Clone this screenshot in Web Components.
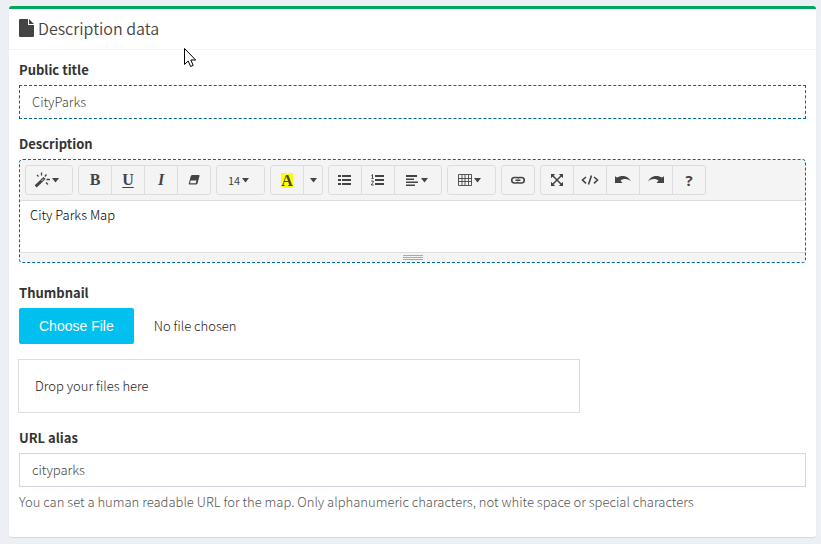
<!DOCTYPE html>
<html lang="en">
<head>
<meta charset="utf-8">
<title>Description data</title>
<style>
body{margin:0;background:#ecf0f5;color:#333;font:300 13px/20px "Source Sans Pro","Noto Sans CJK SC","Noto Sans",sans-serif}
</style>
</head>
<body>
<map-form></map-form>
<mouse-pointer></mouse-pointer>
<script>
function define(name, html, setup){
  const t=document.createElement('template');
  t.innerHTML=html;
  customElements.define(name,class extends HTMLElement{
    connectedCallback(){
      if(this.shadowRoot)return;
      this.attachShadow({mode:'open'}).append(t.content.cloneNode(true));
      if(setup)setup(this,this.shadowRoot);
    }
  });
}

const icons={
  file:'<path d="M1 0h8v6h6v11q0 1-1 1H1q-1 0-1-1V1q0-1 1-1zM10 0l5 5h-5z"/>',
  magic:'<path d="M.7 14.500 9.500 6" stroke="currentColor" stroke-width="3"/><path d="M6.600 8.900 8.300 7.200" stroke="#f4f4f4" stroke-width="1"/><path d="M2 3 3.500 4.500M6.500 .5v3M11.500 2.500 9.800 4.500M11.500 7.500h3.500M11 10.500l2 2" stroke="currentColor" stroke-width="1.300" fill="none"/>',
  eraser:'<path d="M5.500 2h6.300q1 0 .7 1l-2 7.500q-.3 1-1.300 1H2.500q-1 0-.7-1l2-7.500Q4.200 2 5.500 2zM3.700 7.600l-.7 2.700h5.700l.8-2.700z" fill-rule="evenodd"/>',
  ul:'<path d="M0 2h3v2H0zm4 0h9v2H4zM0 6h3v2H0zm4 0h9v2H4zM0 10h3v2H0zm4 0h9v2H4z"/>',
  ol:'<path d="M4 2h9v2H4zM4 6h9v2H4zM4 10h9v2H4z"/><path d="M.5 2.500 1.500 1.500V5.500M.5 5.500h2M.3 8h1.900v1.500L.5 11v1h2.200" stroke="currentColor" fill="none"/>',
  align:'<path d="M1 2h11v2H1zm0 3.500h8v1.500H1zm0 3h12v1.500H1zm0 3h9v1.500H1z"/>',
  table:'<path d="M.5 1.500h13v11H.5zM.5 5.500h13M.5 8.500h13M4 1.500v11M7 1.500v11M10.500 1.500v11" stroke="currentColor" stroke-width=".9" fill="none"/>',
  link:'<path d="M6.300 10H3.500a2.700 2.700 0 0 1 0-5.500h2.500q1.300 0 2 1M7.800 4.500h2.700a2.700 2.700 0 0 1 0 5.500h-2.500q-1.300 0-2-1M4.500 7.200h5" stroke="currentColor" stroke-width="1.600" fill="none"/>',
  full:'<path d="M1 1h4.200L1 5.200zM13 1v4.200L8.800 1zM1 13V8.800L5.200 13zM13 13H8.800L13 8.800z"/><path d="m2 2 10 10M12 2 2 12" stroke="currentColor" stroke-width="1.500"/>',
  code:'<path d="M5 4 1.500 7 5 10.300M13 4 16.500 7 13 10.300M10.500 2.500 7.500 11.500" stroke="currentColor" stroke-width="1.600" fill="none"/>',
  undo:'<path d="M0 3.200 2 4.600C6 2 13 2 16 8.500 12.500 5.500 8.500 5.500 5.500 7.600L7.500 10H0z"/>',
  redo:'<path d="M16 3.200 14 4.600C10 2 3 2 0 8.500 3.500 5.500 7.500 5.500 10.500 7.600L8.500 10H16z"/>',
  caret:'<path d="M0 5h7L3.500 9.500z"/>'
};
const sizes={file:[15,18],magic:[15,16],code:[18,14],undo:[16,14],redo:[16,14],caret:[7,14]};
define('ui-icon','<style>:host{display:inline-flex;flex:none}svg{display:block;fill:currentColor}</style><svg aria-hidden="true"></svg>',(el,r)=>{
  const n=el.getAttribute('name'),[w,h]=sizes[n]||[14,14],s=r.querySelector('svg');
  s.setAttribute('width',w);s.setAttribute('height',h);s.setAttribute('viewBox',`0 0 ${w} ${h}`);
  s.innerHTML=icons[n];
});

define('panel-box',`<style>
:host{display:block;background:#fff;border-top:3px solid #00a65a;border-radius:3px;box-shadow:0 1px 1px rgba(0,0,0,.1)}
header{display:flex;align-items:flex-start;gap:4px;padding:9px 10px 11px;border-bottom:1px solid #f4f4f4;color:#444}
h3{margin:0;font-size:16px;line-height:20px;font-weight:350}
::slotted(ui-icon){padding-top:1px}
section{padding:10px 10px 25px}
</style>
<header><slot name="icon"></slot><h3><slot name="title"></slot></h3></header><section><slot></slot></section>`);

define('text-field',`<style>
:host{display:block;margin-bottom:15px}
label{display:block;margin-bottom:5px;font-weight:700}
input{display:block;box-sizing:border-box;width:100%;height:34px;padding:5px 12px 7px;border:1px solid #d2d6de;border-radius:0;background:#fff;color:#444;font:inherit;outline:0}
:host([dashed]) input{border:1px dashed #006699}
p{margin:5px 0 0;color:#555}
p[hidden]{display:none}
</style><label for="f"></label><input id="f" type="text"><p hidden></p>`,(el,r)=>{
  r.querySelector('label').textContent=el.getAttribute('label');
  r.querySelector('input').value=el.getAttribute('value');
  const h=el.getAttribute('help'),p=r.querySelector('p');
  if(h){p.textContent=h;p.hidden=false;}
});

define('tool-group',`<style>:host{display:inline-flex}
::slotted(:not(:first-child)){margin-left:-1px}
::slotted(:first-child){--rl:3px}::slotted(:last-child){--rr:3px}</style><slot></slot>`);

define('tool-button',`<style>
:host{display:block}
button{display:flex;align-items:center;justify-content:center;gap:2px;box-sizing:border-box;height:30px;min-width:34px;padding:0 6px;border:1px solid #ddd;border-radius:var(--rl,0) var(--rr,0) var(--rr,0) var(--rl,0);background:#f4f4f4;color:#444;font:inherit;font-weight:400;font-size:11px}
:host([size=menu]) button{min-width:48px;padding:0 8px 0 4px}
:host([size=wide]) button{min-width:49px;padding:0 8px 0 4px}
:host([size=slim]) button{min-width:20px;padding:0}
:host([serif]) button{font:700 16px/20px "Liberation Serif",serif}
:host([bold]) button{font:700 15px/20px "Open Sans",sans-serif}
</style><button type="button"><slot></slot></button>`,(el,r)=>r.querySelector('button').setAttribute('aria-label',el.getAttribute('label')));

define('rich-editor',`<style>
:host{display:block;margin-bottom:20px}
label{display:block;margin-bottom:5px;font-weight:700}
.frame{border:1px dashed #006699;border-radius:4px;overflow:hidden}
.bar{display:flex;flex-wrap:wrap;gap:5px;padding:5px;background:#f4f4f4;border-bottom:1px solid #ddd}
textarea{display:block;box-sizing:border-box;width:100%;height:51px;padding:4px 10px;border:0;background:#fff;color:#000;font:inherit;resize:none;outline:0}
.grip{display:flex;flex-direction:column;align-items:center;gap:1px;padding:2px 0;border-top:1px solid #ddd;background:#f4f4f4}
.grip i{width:20px;height:1px;background:#a9a9a9}
.mark{background:#ff0;line-height:15px}
u{text-underline-offset:2px;text-decoration-thickness:1px}
</style>
<label for="t">Description</label>
<div class="frame">
<div class="bar" role="toolbar">
<tool-group><tool-button size="menu" label="Style"><ui-icon name="magic"></ui-icon><ui-icon name="caret"></ui-icon></tool-button></tool-group>
<tool-group><tool-button serif label="Bold">B</tool-button><tool-button serif label="Underline"><u>U</u></tool-button><tool-button serif label="Italic"><em>I</em></tool-button><tool-button label="Clear formatting"><ui-icon name="eraser"></ui-icon></tool-button></tool-group>
<tool-group><tool-button size="wide" label="Font size">14 <ui-icon name="caret"></ui-icon></tool-button></tool-group>
<tool-group><tool-button serif label="Text colour"><span class="mark">A</span></tool-button><tool-button size="slim" label="More colours"><ui-icon name="caret"></ui-icon></tool-button></tool-group>
<tool-group><tool-button label="Bulleted list"><ui-icon name="ul"></ui-icon></tool-button><tool-button label="Numbered list"><ui-icon name="ol"></ui-icon></tool-button><tool-button size="menu" label="Paragraph"><ui-icon name="align"></ui-icon><ui-icon name="caret"></ui-icon></tool-button></tool-group>
<tool-group><tool-button size="wide" label="Table"><ui-icon name="table"></ui-icon><ui-icon name="caret"></ui-icon></tool-button></tool-group>
<tool-group><tool-button label="Link"><ui-icon name="link"></ui-icon></tool-button></tool-group>
<tool-group><tool-button label="Full screen"><ui-icon name="full"></ui-icon></tool-button><tool-button label="Code view"><ui-icon name="code"></ui-icon></tool-button><tool-button label="Undo"><ui-icon name="undo"></ui-icon></tool-button><tool-button label="Redo"><ui-icon name="redo"></ui-icon></tool-button><tool-button bold label="Help">?</tool-button></tool-group>
</div>
<textarea id="t">City Parks Map</textarea>
<div class="grip"><i></i><i></i><i></i></div>
</div>`);

define('file-field',`<style>
:host{display:block;margin-bottom:15px}
label{display:block;margin-bottom:5px;font-weight:700}
input{display:block;width:100%;font:inherit;color:#222}
input::file-selector-button{height:36px;margin:0 20px 0 0;padding:0 20px;border:0;border-radius:2px;background:#00c0ef;color:#fff;font:14px/20px "Liberation Sans",Arial,sans-serif}
.drop{box-sizing:border-box;max-width:562px;margin:15px 0 0 -1px;padding:16px;border:1px solid #ddd;color:#222}
</style><label for="f">Thumbnail</label><input id="f" type="file"><div class="drop">Drop your files here</div>`);

define('map-form',`<style>:host{display:block;padding:6px 5px 6px 9px}ui-icon{color:#444}</style>
<panel-box><ui-icon slot="icon" name="file"></ui-icon><span slot="title">Description data</span>
<text-field dashed label="Public title" value="CityParks"></text-field>
<rich-editor></rich-editor>
<file-field></file-field>
<text-field style="margin:0" label="URL alias" value="cityparks" help="You can set a human readable URL for the map. Only alphanumeric characters, not white space or special characters"></text-field>
</panel-box>`);

define('mouse-pointer',`<style>:host{position:absolute;left:184px;top:48px;pointer-events:none}svg{display:block}</style>
<svg width="13" height="20" viewBox="0 0 13 20" aria-hidden="true"><path d="M.5.5v16l3.700-3.500 2.400 5.500 2.600-1.200-2.400-5.300h4.900z" fill="#fff" stroke="#000"/></svg>`);
</script>
</body>
</html>
